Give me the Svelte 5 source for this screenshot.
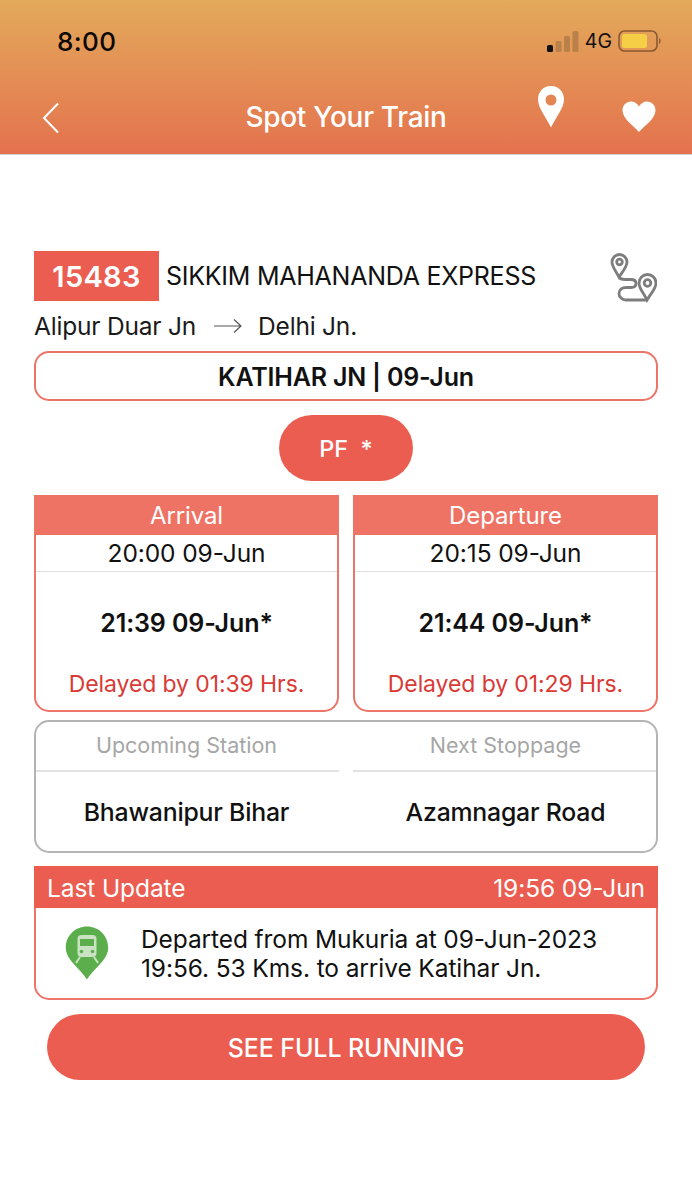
<script>
  const times = [
    { title: 'Arrival', sched: '20:00 09-Jun', actual: '21:39 09-Jun*', delay: 'Delayed by 01:39 Hrs.' },
    { title: 'Departure', sched: '20:15 09-Jun', actual: '21:44 09-Jun*', delay: 'Delayed by 01:29 Hrs.' }
  ];
  const stops = [
    { label: 'Upcoming Station', name: 'Bhawanipur Bihar' },
    { label: 'Next Stoppage', name: 'Azamnagar Road' }
  ];
</script>

<div class="page">
  <header class="top">
    <div class="status">
      <span class="clock">8:00</span>
      <div class="status-right">
        <svg width="32" height="21" viewBox="0 0 32 21">
          <rect x="0" y="14" width="6" height="7" rx="1.5" fill="#111" />
          <rect x="8.500" y="10" width="6" height="11" rx="1.5" fill="#b98149" />
          <rect x="17" y="5" width="6" height="16" rx="1.5" fill="#b98149" />
          <rect x="25.500" y="0" width="6" height="21" rx="1.5" fill="#b98149" />
        </svg>
        <span class="net">4G</span>
        <svg width="44" height="22" viewBox="0 0 44 22">
          <rect x="1" y="1" width="38" height="20" rx="5.500" fill="none" stroke="#8a5a30" stroke-width="1.600" />
          <rect x="4" y="4" width="25" height="14" rx="2.500" fill="#f5cf45" />
          <path d="M41 8c2 .6 2 5.400 0 6z" fill="#8a5a30" />
        </svg>
      </div>
    </div>
    <nav class="bar">
      <svg class="back" width="20" height="32" viewBox="0 0 20 32">
        <path d="M17 1.500 3 16l14 14.500" fill="none" stroke="#fff" stroke-width="2" />
      </svg>
      <h1>Spot Your Train</h1>
      <svg class="pin" width="28" height="42" viewBox="0 0 28 42">
        <path fill="#fff" fill-rule="evenodd" d="M14 0C6 0 1 6 1 13.500 1 22 9 31 14 41.500 19 31 27 22 27 13.500 27 6 22 0 14 0Zm0 8.500a5.500 5.500 0 1 1 0 11 5.500 5.500 0 0 1 0-11Z" />
      </svg>
      <svg class="heart" width="34" height="32" viewBox="0 0 34 32">
        <path fill="#fff" d="M17 31C12 25 .5 18 .5 9.500.5 4 4.500.5 9 .5c3.500 0 6.500 2 8 5 1.500-3 4.500-5 8-5 4.500 0 8.500 3.500 8.500 9C33.500 18 22 25 17 31Z" />
      </svg>
    </nav>
  </header>

  <main class="content">
    <div class="train">
      <span class="number">15483</span>
      <span class="name">SIKKIM MAHANANDA EXPRESS</span>
      <svg class="route" width="48" height="52" viewBox="0 0 48 52" fill="none" stroke="#7d7d7d" stroke-width="2.800">
        <path d="M10 26C7 20 3 16 3 11a7.500 7.500 0 0 1 15 0c0 5-4 9-8 15Z" />
        <circle cx="10.500" cy="11" r="2.800" />
        <path d="M38 49c-3-7-8-11-8-17a8.500 8.500 0 0 1 17 0c0 6-5 10-9 17Z" />
        <circle cx="38.500" cy="32" r="3.300" />
        <path d="M10 26c1 2 3 2.500 6 2.500h6c3 0 5 1.500 5 4s-2 4-5 4h-5c-4 0-7 2.500-7 6s3 6.500 7 6.500h21" />
      </svg>
    </div>

    <div class="path">
      <span>Alipur Duar Jn</span>
      <svg width="30" height="16" viewBox="0 0 30 16" fill="none" stroke="#555" stroke-width="1.200">
        <path d="M1 8h27M21 1.500 28 8l-7 6.500" />
      </svg>
      <span>Delhi Jn.</span>
    </div>

    <div class="station">KATIHAR JN | 09-Jun</div>

    <div class="pf">PF&nbsp; *</div>

    <div class="times">
      {#each times as t}
        <section class="time-card">
          <h2>{t.title}</h2>
          <div class="sched">{t.sched}</div>
          <div class="actual">{t.actual}</div>
          <div class="delay">{t.delay}</div>
        </section>
      {/each}
    </div>

    <div class="stops">
      {#each stops as s}
        <div class="stop">
          <div class="stop-label">{s.label}</div>
          <div class="stop-name">{s.name}</div>
        </div>
      {/each}
    </div>

    <section class="update">
      <div class="update-head">
        <span>Last Update</span>
        <span>19:56 09-Jun</span>
      </div>
      <div class="update-body">
        <svg class="train-pin" width="44" height="54" viewBox="0 0 44 54">
          <path fill="#5cae4c" d="M22 .5C10 .5.800 10 .800 21.500.800 34 14 41 22 53.500 30 41 43.200 34 43.200 21.500 43.200 10 34 .5 22 .5Z" />
          <rect x="12.500" y="9" width="19" height="22" rx="4" fill="#c9e3c2" />
          <rect x="15" y="13" width="14" height="7" fill="#5cae4c" />
          <circle cx="16.500" cy="25.500" r="1.800" fill="#5cae4c" />
          <circle cx="27.500" cy="25.500" r="1.800" fill="#5cae4c" />
          <path d="M15 31l-4 6M29 31l4 6" stroke="#c9e3c2" stroke-width="2" fill="none" />
        </svg>
        <p>Departed from Mukuria at 09-Jun-2023<br />19:56. 53 Kms. to arrive Katihar Jn.</p>
      </div>
    </section>

    <button class="full">SEE FULL RUNNING</button>
  </main>
</div>

<style>
  :global(body) {
    margin: 0;
    background: #fff;
  }

  .page {
    width: 692px;
    height: 1200px;
    overflow: hidden;
    font-family: Inter, "Liberation Sans", sans-serif;
    color: #111;
  }

  .top {
    height: 155px;
    box-sizing: border-box;
    border-bottom: 1px solid #d0d0d0;
    background: linear-gradient(180deg, #e3aa5b 0%, #e4724e 100%);
  }

  .status {
    display: flex;
    justify-content: space-between;
    align-items: center;
    height: 42px;
    padding: 20px 30px 0 57px;
  }

  .clock {
    font-size: 26px;
    font-weight: 500;
    color: #0b0805;
    letter-spacing: 0.4px;
  }

  .status-right {
    display: flex;
    align-items: center;
    gap: 6px;
  }

  .net {
    font-size: 19.500px;
    color: #111;
  }

  .bar {
    position: relative;
    height: 92px;
  }

  .bar h1 {
    margin: 0;
    padding-top: 37px;
    text-align: center;
    font-size: 28px;
    line-height: 36px;
    font-weight: 500;
    color: #fff;
    letter-spacing: -0.3px;
  }

  .back {
    position: absolute;
    left: 41px;
    top: 40px;
  }

  .pin {
    position: absolute;
    left: 537px;
    top: 24px;
  }

  .heart {
    position: absolute;
    left: 622px;
    top: 39px;
  }

  .content {
    padding: 96px 34px 0;
  }

  .train {
    position: relative;
    display: flex;
    align-items: center;
    height: 50px;
  }

  .number {
    display: flex;
    align-items: center;
    justify-content: center;
    width: 125px;
    height: 50px;
    background: #eb5d50;
    color: #fff;
    font-size: 29px;
    font-weight: 600;
    letter-spacing: 0.3px;
  }

  .name {
    margin-left: 7px;
    font-size: 25px;
    letter-spacing: -0.25px;
    color: #111;
  }

  .route {
    position: absolute;
    right: 1px;
    top: 0;
  }

  .path {
    display: flex;
    align-items: center;
    height: 50px;
    font-size: 24.500px;
    letter-spacing: -0.2px;
    color: #1a1a1a;
  }

  .path svg {
    margin: 0 15px 0 17px;
  }

  .station {
    box-sizing: border-box;
    height: 50px;
    padding-top: 2px;
    border: 2px solid #ec7468;
    border-radius: 15px;
    display: flex;
    align-items: center;
    justify-content: center;
    font-size: 25px;
    font-weight: 600;
    letter-spacing: -0.2px;
  }

  .pf {
    box-sizing: border-box;
    width: 134px;
    height: 66px;
    margin: 14px auto;
    border-radius: 33px;
    background: #eb5d50;
    color: #fff;
    display: flex;
    align-items: center;
    justify-content: center;
    font-size: 23.500px;
    font-weight: 500;
  }

  .times {
    display: grid;
    grid-template-columns: 305px 305px;
    gap: 14px;
    height: 217px;
  }

  .time-card {
    box-sizing: border-box;
    border: 2px solid #ec7468;
    border-top: 0;
    border-radius: 0 0 15px 15px;
    text-align: center;
    overflow: hidden;
  }

  .time-card h2 {
    margin: 0 -2px;
    height: 40px;
    line-height: 42px;
    background: #ef7364;
    color: #fff;
    font-size: 24px;
    font-weight: 400;
    letter-spacing: -0.1px;
  }

  .sched {
    height: 36px;
    line-height: 36px;
    border-bottom: 1px solid #e0e0e0;
    font-size: 24.500px;
    letter-spacing: -0.1px;
  }

  .actual {
    margin-top: 32px;
    line-height: 38px;
    font-size: 25px;
    font-weight: 600;
    letter-spacing: -0.1px;
  }

  .delay {
    margin-top: 27px;
    line-height: 30px;
    font-size: 23px;
    color: #d93a36;
    letter-spacing: -0.1px;
  }

  .stops {
    box-sizing: border-box;
    display: grid;
    grid-template-columns: 305px 305px;
    gap: 14px;
    height: 133px;
    margin-top: 8px;
    border: 2px solid #b4b4b4;
    border-radius: 15px;
    overflow: hidden;
    text-align: center;
  }

  .stop {
    width: 305px;
    margin-left: -2px;
  }

  .stop-label {
    height: 50px;
    line-height: 47px;
    border-bottom: 2px solid #e2e2e2;
    box-sizing: border-box;
    font-size: 21.500px;
    color: #a6a6a6;
  }

  .stop-name {
    line-height: 80px;
    font-size: 24.800px;
    font-weight: 500;
    letter-spacing: -0.2px;
  }

  .update {
    box-sizing: border-box;
    height: 134px;
    margin-top: 13px;
    border: 2px solid #ec7468;
    border-top: 0;
    border-radius: 0 0 15px 15px;
  }

  .update-head {
    display: flex;
    justify-content: space-between;
    align-items: center;
    margin: 0 -2px;
    height: 42px;
    padding: 2px 13px 0;
    box-sizing: border-box;
    background: #eb5d50;
    color: #fff;
    font-size: 24.500px;
    letter-spacing: -0.1px;
  }

  .update-body {
    display: flex;
    align-items: center;
    padding-top: 17px;
  }

  .train-pin {
    flex: none;
    margin-left: 29px;
    margin-top: -2px;
  }

  .update-body p {
    margin: 0 0 0 32px;
    font-size: 24.500px;
    line-height: 29px;
    letter-spacing: -0.1px;
    white-space: nowrap;
  }

  .full {
    display: block;
    width: 598px;
    height: 66px;
    margin: 14px auto 0;
    padding-top: 2px;
    border: 0;
    border-radius: 33px;
    background: #eb5d50;
    color: #fff;
    font-family: inherit;
    font-size: 25px;
    font-weight: 500;
    letter-spacing: -0.1px;
  }
</style>
